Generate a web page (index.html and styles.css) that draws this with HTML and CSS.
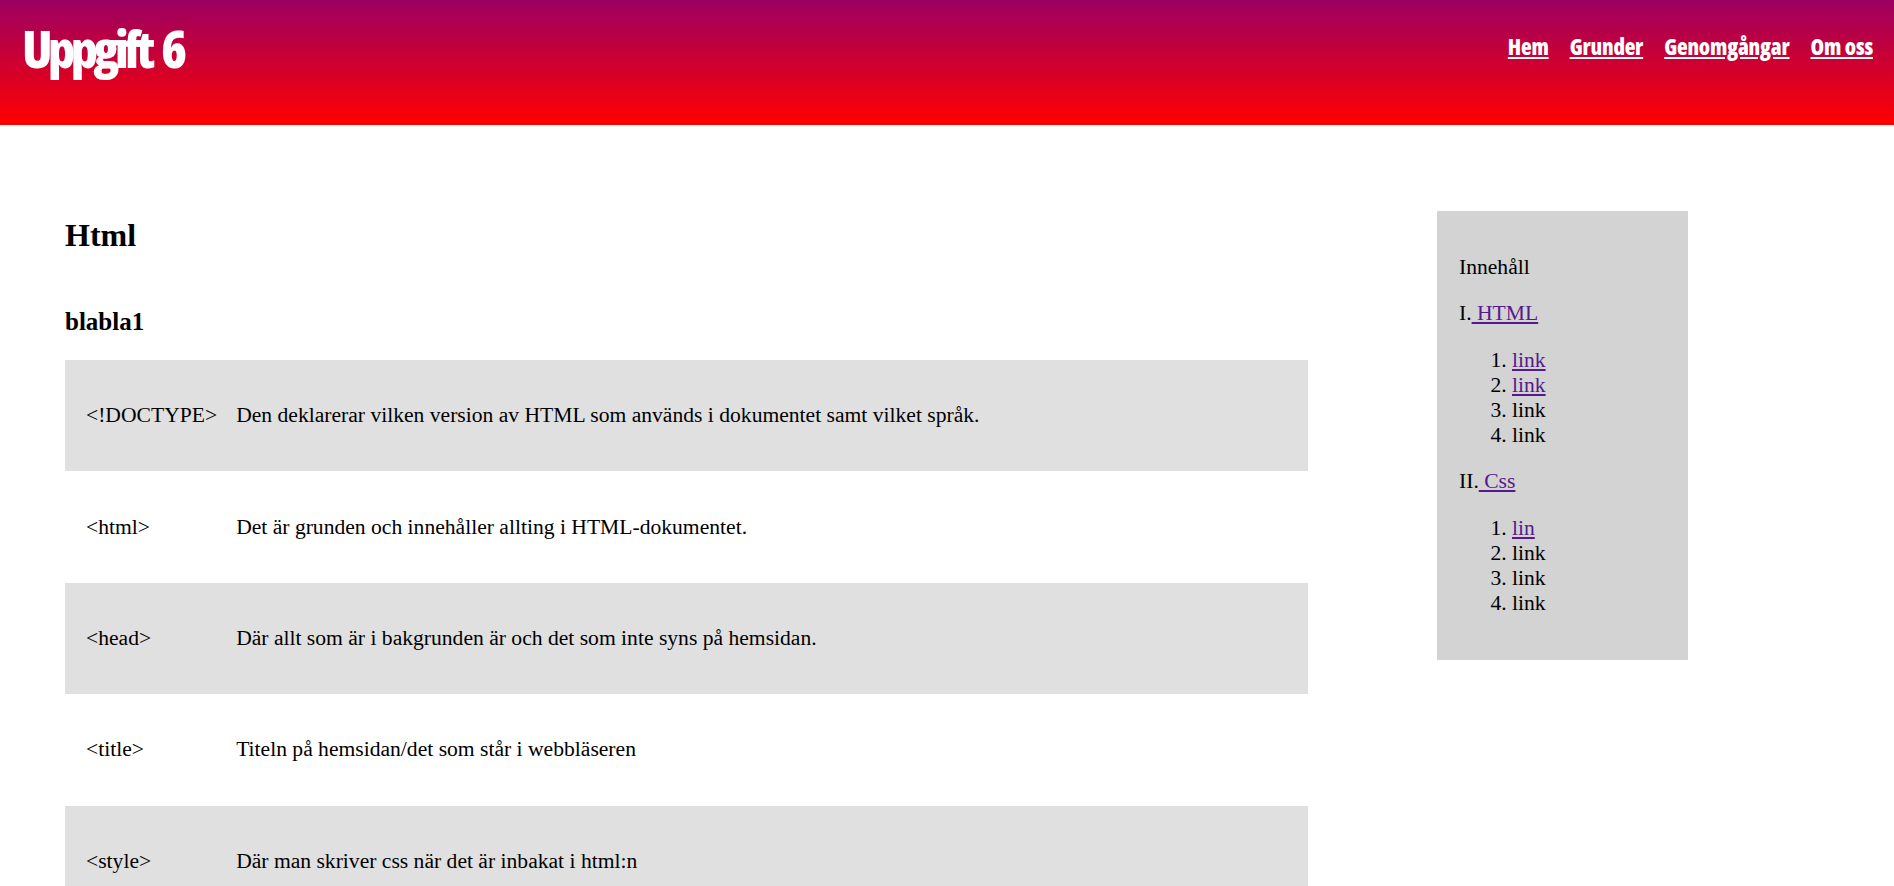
FILE: index.html
```html
<!DOCTYPE html>
<html lang="sv">
<head>
<meta charset="utf-8">
<title>Uppgift 6</title>
<link rel="stylesheet" href="styles.css">
</head>
<body>
<header class="site-header">
  <h1 class="site-title">Uppgift 6</h1>
  <nav class="site-nav">
    <a href="#">Hem</a>
    <a href="#">Grunder</a>
    <a href="#">Genomgångar</a>
    <a href="#">Om oss</a>
  </nav>
</header>
<div class="page">
  <main class="content">
    <h2 class="section-title">Html</h2>
    <h3 class="sub-title">blabla1</h3>
    <table class="tag-table">
      <tr class="row-gray"><td class="tag">&lt;!DOCTYPE&gt;</td><td class="desc">Den deklarerar vilken version av HTML som används i dokumentet samt vilket språk.</td></tr>
      <tr><td class="tag">&lt;html&gt;</td><td class="desc">Det är grunden och innehåller allting i HTML-dokumentet.</td></tr>
      <tr class="row-gray"><td class="tag">&lt;head&gt;</td><td class="desc">Där allt som är i bakgrunden är och det som inte syns på hemsidan.</td></tr>
      <tr><td class="tag">&lt;title&gt;</td><td class="desc">Titeln på hemsidan/det som står i webbläseren</td></tr>
      <tr class="row-gray"><td class="tag">&lt;style&gt;</td><td class="desc">Där man skriver css när det är inbakat i html:n</td></tr>
    </table>
  </main>
  <aside class="toc">
    <p>Innehåll</p>
    <p>I.<a href="#" class="toc-link"> HTML</a></p>
    <ol>
      <li><a href="#" class="toc-link">link</a></li>
      <li><a href="#" class="toc-link">link</a></li>
      <li>link</li>
      <li>link</li>
    </ol>
    <p>II.<a href="#" class="toc-link"> Css</a></p>
    <ol>
      <li><a href="#" class="toc-link">lin</a></li>
      <li>link</li>
      <li>link</li>
      <li>link</li>
    </ol>
  </aside>
</div>
</body>
</html>
```
FILE: styles.css
```css
html, body {
  margin: 0;
  padding: 0;
}
body {
  font-family: "Liberation Serif", "Times New Roman", serif;
  font-size: 21.6px;
  color: #000;
  background: #fff;
}
.site-header {
  height: 125px;
  background: linear-gradient(to bottom, #9c0062, #ff0000);
  display: flex;
  justify-content: space-between;
  align-items: flex-start;
  padding: 0 21px 0 22px;
}
.site-title {
  margin: 22px 0 0;
  font-family: Impact, "Open Sans", sans-serif;
  font-weight: 800;
  font-stretch: 75%;
  font-size: 52px;
  line-height: 52px;
  letter-spacing: -4.5px;
  word-spacing: 6px;
  color: #fff;
}
.site-nav {
  margin-top: 35px;
  display: flex;
  gap: 21px;
  font-family: Impact, "Open Sans", sans-serif;
  font-weight: 800;
  font-stretch: 75%;
  font-size: 22px;
  line-height: 22px;
  letter-spacing: -0.2px;
}
.site-nav a {
  color: #fff;
  text-decoration: underline;
}
.page {
  display: flex;
  align-items: flex-start;
  padding-left: 65px;
}
.content {
  width: 1243px;
}
.section-title {
  margin: 92px 0 53px;
  font-size: 32px;
  line-height: 37px;
  font-weight: bold;
}
.sub-title {
  margin: 0 0 24px;
  font-size: 25px;
  line-height: 29px;
  font-weight: bold;
}
.tag-table {
  width: 100%;
  border-collapse: collapse;
  border-spacing: 0;
}
.tag-table td {
  padding: 43.2px 0;
  line-height: 25px;
  vertical-align: middle;
  white-space: nowrap;
}
.tag-table .tag {
  padding-left: 21px;
  padding-right: 9px;
  width: 1px;
}
.tag-table .desc {
  padding-left: 10px;
}
.row-gray {
  background: #e0e0e0;
}
.toc {
  margin: 86px 0 0 129px;
  width: 251px;
  box-sizing: border-box;
  padding: 22px;
  background: #d3d3d3;
  line-height: 25px;
}
.toc p {
  margin: 21.6px 0;
}
.toc ol {
  margin: 21.6px 0;
  padding-left: 53px;
}
.toc-link {
  color: #551a8b;
}
```
